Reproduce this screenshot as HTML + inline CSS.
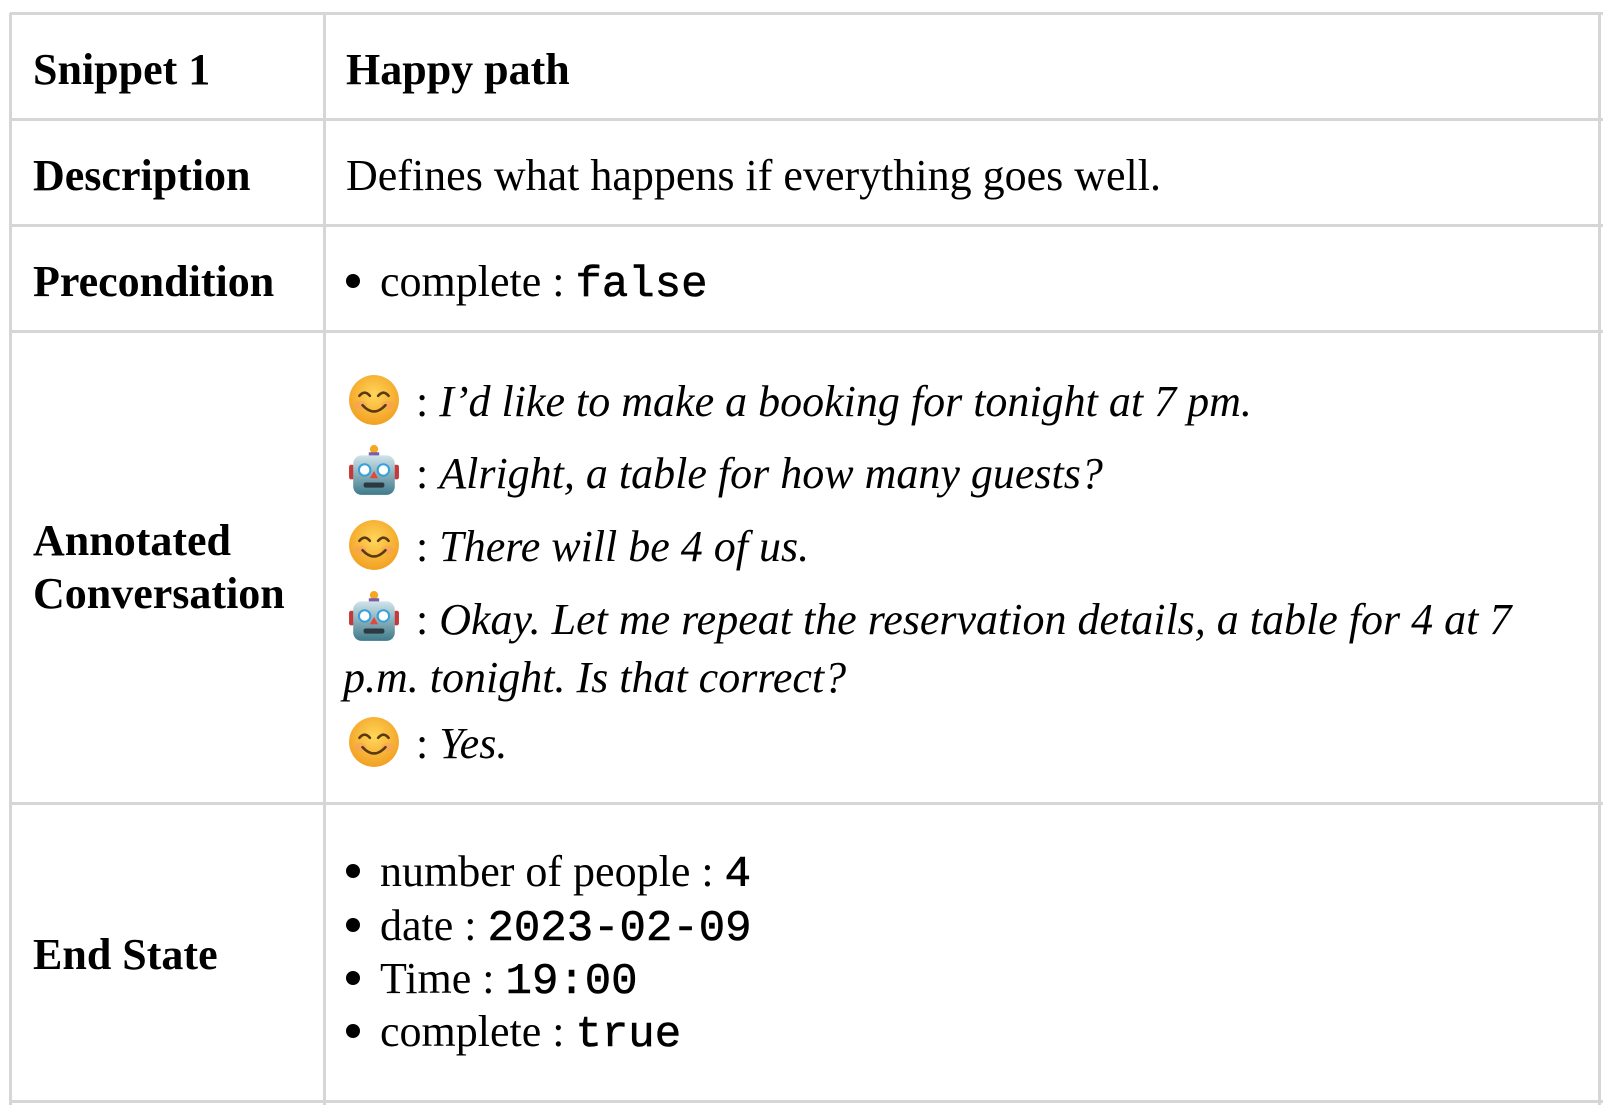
<!DOCTYPE html>
<html><head><meta charset="utf-8"><style>
body{margin:0;width:1612px;height:1114px;background:#fff;position:relative;overflow:hidden;font-family:"Liberation Serif",serif;color:#000}
.t{position:absolute;font-size:44px;line-height:44px;white-space:nowrap}
.b{font-weight:bold}
.i{font-style:italic}
.m{font-family:"Liberation Mono",monospace;font-size:44px;-webkit-text-stroke:0.6px #000}
.h{position:absolute;background:#d6d6d6;height:3px;left:10px;width:1593px}
.v{position:absolute;background:#d6d6d6;width:3px;top:13px;height:1092px}
.e{position:absolute;width:52px;height:52px}
.dot{display:inline-block;width:14px;height:14px;border-radius:50%;background:#000;margin-right:20px;vertical-align:8px}
</style></head><body>
<div class="h" style="top:12px"></div>
<div class="h" style="top:118px"></div>
<div class="h" style="top:224px"></div>
<div class="h" style="top:330px"></div>
<div class="h" style="top:802px"></div>
<div class="h" style="top:1100px"></div>
<div class="v" style="left:9px"></div>
<div class="v" style="left:323px"></div>
<div class="v" style="left:1598px"></div>

<div class="t b" style="left:33px;top:48px">Snippet 1</div>
<div class="t b" style="left:346px;top:48px">Happy path</div>
<div class="t b" style="left:33px;top:154px">Description</div>
<div class="t" style="left:346px;top:154px">Defines what happens if everything goes well.</div>
<div class="t b" style="left:33px;top:260px">Precondition</div>
<div class="t" style="left:346px;top:260px"><span class="dot"></span>complete : <span class="m">false</span></div>
<div class="t b" style="left:33px;top:519px">Annotated</div>
<div class="t b" style="left:33px;top:572px">Conversation</div>
<div class="t b" style="left:33px;top:933px">End State</div>

<svg width="0" height="0" style="position:absolute"><defs>
<radialGradient id="sg" cx="50%" cy="40%" r="60%"><stop offset="0" stop-color="#ffd65a"/><stop offset="1" stop-color="#f2a022"/></radialGradient>
<linearGradient id="rg" x1="0" y1="0" x2="0" y2="1"><stop offset="0" stop-color="#cfe3ea"/><stop offset="1" stop-color="#3f7a8a"/></linearGradient>
<g id="smile"><circle cx="25" cy="25" r="24" fill="url(#sg)"/><ellipse cx="12" cy="30" rx="6" ry="4" fill="#f79a6a" opacity=".5"/><ellipse cx="38" cy="30" rx="6" ry="4" fill="#f79a6a" opacity=".5"/><path d="M11 21q5-6 10 0M29 21q5-6 10 0" stroke="#5a3a10" stroke-width="2.5" fill="none" stroke-linecap="round"/><path d="M14 30q11 12 22 0" stroke="#5a3a10" stroke-width="2.5" fill="none" stroke-linecap="round"/></g>
<g id="robot"><circle cx="25" cy="4" r="4" fill="#f5a623"/><rect x="20" y="7" width="10" height="4" fill="#7a5ca8"/><rect x="1" y="19" width="5" height="14" rx="2" fill="#c43a3a"/><rect x="44" y="19" width="5" height="14" rx="2" fill="#c43a3a"/><rect x="5" y="10" width="40" height="38" rx="8" fill="url(#rg)"/><circle cx="16" cy="24" r="5.5" fill="#fff" stroke="#3aa0d8" stroke-width="2"/><circle cx="34" cy="24" r="5.5" fill="#fff" stroke="#3aa0d8" stroke-width="2"/><path d="M25 25l-4 7h8z" fill="#e04a3a"/><rect x="15" y="36" width="20" height="5" rx="2" fill="#2a3a40"/></g>
</defs></svg>

<svg class="e" style="left:348px;top:374px" viewBox="0 0 50 50"><use href="#smile"/></svg>
<div class="t" style="left:416px;top:380px">: <span class="i">I’d like to make a booking for tonight at 7 pm.</span></div>
<svg class="e" style="left:348px;top:445px" viewBox="0 0 50 50"><use href="#robot"/></svg>
<div class="t" style="left:416px;top:452px">: <span class="i">Alright, a table for how many guests?</span></div>
<svg class="e" style="left:348px;top:519px" viewBox="0 0 50 50"><use href="#smile"/></svg>
<div class="t" style="left:416px;top:525px">: <span class="i">There will be 4 of us.</span></div>
<svg class="e" style="left:348px;top:591px" viewBox="0 0 50 50"><use href="#robot"/></svg>
<div class="t" style="left:416px;top:598px">: <span class="i">Okay. Let me repeat the reservation details, a table for 4 at 7</span></div>
<div class="t i" style="left:343px;top:656px">p.m. tonight. Is that correct?</div>
<svg class="e" style="left:348px;top:716px" viewBox="0 0 50 50"><use href="#smile"/></svg>
<div class="t" style="left:416px;top:722px">: <span class="i">Yes.</span></div>

<div class="t" style="left:346px;top:850px"><span class="dot"></span>number of people : <span class="m">4</span></div>
<div class="t" style="left:346px;top:904px"><span class="dot"></span>date : <span class="m">2023-02-09</span></div>
<div class="t" style="left:346px;top:957px"><span class="dot"></span>Time : <span class="m">19:00</span></div>
<div class="t" style="left:346px;top:1010px"><span class="dot"></span>complete : <span class="m">true</span></div>
</body></html>
